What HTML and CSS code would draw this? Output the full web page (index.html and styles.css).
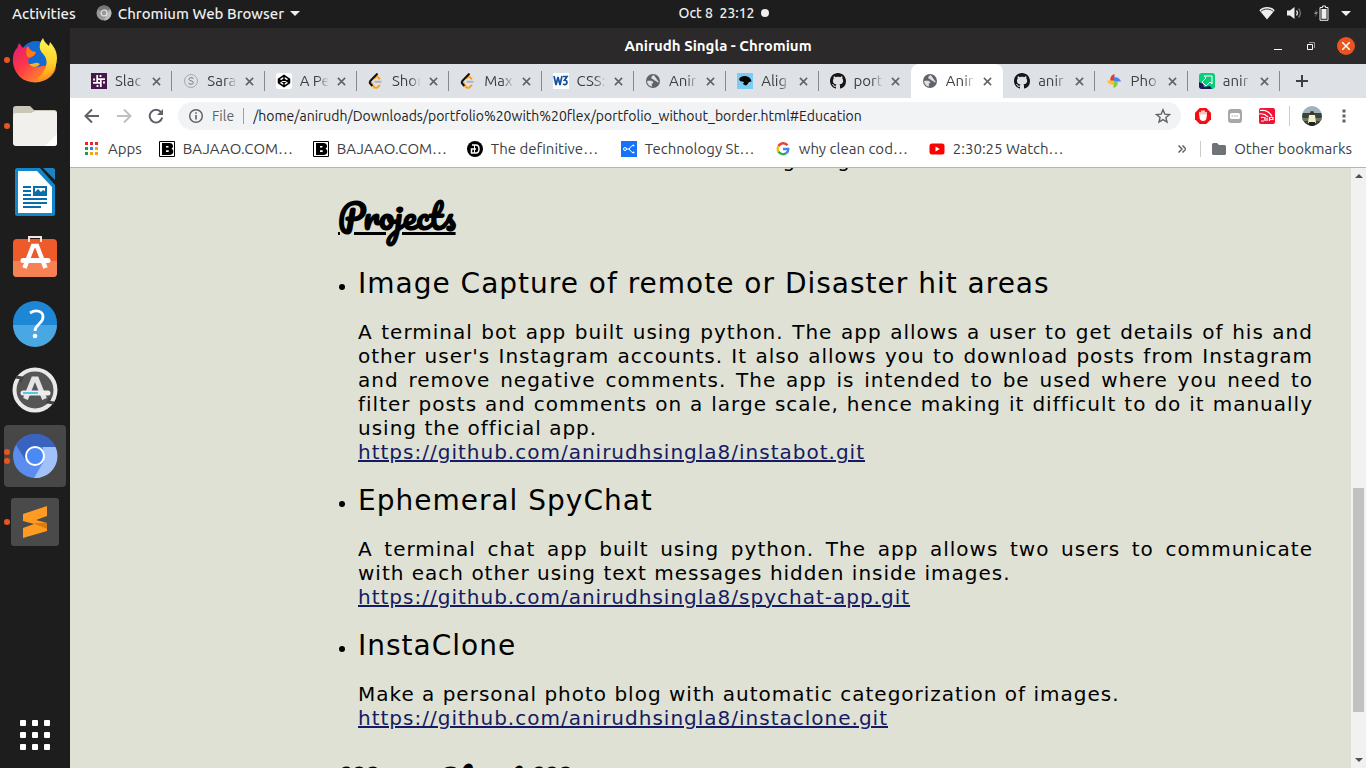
FILE: index.html
```html
<!DOCTYPE html>
<html lang="en">
<head>
<meta charset="utf-8">
<title>Anirudh Singla - Chromium</title>
<link rel="stylesheet" href="styles.css">
</head>
<body>
<svg class="defs" aria-hidden="true">
  <symbol id="x" viewBox="0 0 10 10"><path d="M1 1l8 8M9 1L1 9" stroke="#5f6368" stroke-width="1.7"/></symbol>
  <symbol id="globe" viewBox="0 0 16 16"><circle cx="8" cy="8" r="7" fill="#5f6368"/><path d="M9 2.2c-1 .8-2.5.8-2.5 2.3 0 1.7 2 .9 2.5 2.2.4 1 2.200.5 2.700 1.500.3.8 1 .8 1.900.500M2.500 8h3.200c1.600 0 2.300.8 2.300 2H6.600v3.300c-2.400-.5-4.300-2.600-4.100-5.300z" fill="#dee1e6" stroke="#dee1e6" stroke-width=".6"/></symbol>
  <symbol id="github" viewBox="0 0 16 16"><path fill="#171515" d="M8 0C3.580 0 0 3.580 0 8c0 3.540 2.290 6.530 5.470 7.590.4.070.550-.170.550-.380 0-.190-.010-.820-.010-1.490-2.010.370-2.530-.490-2.690-.940-.090-.230-.480-.940-.820-1.130-.280-.150-.680-.520-.010-.530.630-.010 1.080.580 1.230.820.720 1.210 1.870.870 2.330.660.070-.520.280-.870.510-1.070-1.780-.200-3.640-.890-3.640-3.950 0-.870.310-1.590.820-2.150-.080-.200-.360-1.020.080-2.120 0 0 .670-.210 2.200.820.640-.180 1.320-.270 2-.270s1.360.090 2 .270c1.530-1.040 2.200-.820 2.200-.820.440 1.100.160 1.920.080 2.120.510.560.820 1.270.820 2.150 0 3.070-1.870 3.750-3.650 3.950.290.250.540.730.540 1.480 0 1.070-.010 1.930-.010 2.200 0 .210.150.460.550.380A8 8 0 0 0 16 8c0-4.420-3.580-8-8-8z"/></symbol>
  <symbol id="leet" viewBox="0 0 16 16"><path d="M6 5.500L8.500 3l3.500 3.300M3 9l3.300 5.500 2.700.3 3-2.800" fill="none" stroke="#ffa116" stroke-width="2"/><path d="M9.500 .5L2.300 8c-.8 1-.6 2 0 2.700l2 2.300" fill="none" stroke="#111" stroke-width="2"/><path d="M6.500 8.800h7" stroke="#b3b3b3" stroke-width="2"/></symbol>
  <symbol id="bajaao" viewBox="0 0 16 16"><path fill="#fff" stroke="#000" d="M.5.5h15v15H.5z"/><path d="M3 2h7.500C13 2 14 3.500 14 5c0 1.300-.7 2.300-1.500 2.700 1 .4 1.800 1.500 1.800 2.800 0 2-1.500 3.500-3.800 3.500H3z"/><path d="M7 5h2.500v1.600H7zm0 4.200h2.700v1.700H7z" fill="#fff"/></symbol>
</svg>

<header class="topbar">
  <div class="topbar-left">
    <button class="plain">Activities</button>
    <button class="plain app-menu">
      <svg width="16" height="16" viewBox="0 0 16 16"><circle cx="8" cy="8" r="7.500" fill="#999"/><path d="M8 8L1.500 4.200A7.500 7.500 0 0 1 14.500 4.500H8z" fill="#777"/><path d="M8 15.500L11 9l3.500-4.500A7.500 7.500 0 0 1 8 15.500z" fill="#bbb"/><circle cx="8" cy="8" r="3" fill="#999" stroke="#e4e4e4" stroke-width="1.200"/></svg>
      Chromium Web Browser <span class="caret"></span></button>
  </div>
  <button class="plain clock">Oct 8&nbsp; 23:12 <span class="dot"></span></button>
  <div class="status">
    <svg width="16" height="14" viewBox="0 0 16 14"><path d="M8 13.500L.3 4.200C4.500-.2 11.500-.2 15.700 4.200z" fill="#eee"/><path d="M1.800 5.300c3.600-3 8.800-3 12.400 0" fill="none" stroke="#333"/></svg>
    <svg width="15" height="14" viewBox="0 0 15 14"><path d="M0 4.500h3L7.500 1v12L3 9.500H0z" fill="#eee"/><path d="M9.500 4.500c1.200 1.500 1.200 3.500 0 5" fill="none" stroke="#ddd" stroke-width="1.300"/><path d="M11.500 2.500c2.500 2.500 2.500 6.500 0 9" fill="none" stroke="#777" stroke-width="1.300"/></svg>
    <svg width="15" height="16" viewBox="0 0 15 16"><path d="M3 4L0 9h2l-1 3.500L4 7H2z" fill="#888"/><path d="M6 2.500h2.500V1h3v1.500H14v12.800H6z" fill="none" stroke="#eee"/><path d="M7.500 4h5v9.800h-5z" fill="#eee"/></svg>
    <span class="caret"></span>
  </div>
</header>

<div class="desktop">
<nav class="dock" aria-label="Dock">
  <button class="plain dock-item" aria-label="Firefox"><span class="marks"><i></i></span>
    <svg width="46" height="46" viewBox="0 0 46 46"><defs><linearGradient id="ff" x1="0" y1="0" x2="1" y2="1"><stop offset="0" stop-color="#d91b7c"/><stop offset=".4" stop-color="#ff3647"/><stop offset="1" stop-color="#ffb320"/></linearGradient><linearGradient id="fy" x1="0" y1="0" x2="0" y2="1"><stop offset="0" stop-color="#fff44f"/><stop offset=".6" stop-color="#ffd12c"/><stop offset="1" stop-color="#ff9414"/></linearGradient></defs><circle cx="24" cy="20" r="16" fill="#126bd3"/><path d="M7 6l4 5 5-2c1 3 4 6 8 6-2 5-5 5-7 6-2 4 0 8 4 9 6 1 9-2 12-1 6-4 6-12 4-18 7 8 10 20 3 27-8 9-23 10-32 2C-1 31-1 17 5 11z" fill="url(#ff)"/><path d="M16 9c1 3 4 6 8 6-2 5-5 5-7 6-3-2-4-7-1-12z" fill="#ff7a18"/><path d="M17 27c5 0 7-3 11 0-3 4-8 4-11 0z" fill="#ffad23"/><path d="M31 1c-5 7-4 12 1 17 5 6 3 16-8 25 13-1 21-10 21-22 0-8-4-12-7-16l-1 4c-2-2-5-4-6-8z" fill="url(#fy)"/></svg></button>
  <button class="plain dock-item" aria-label="Files"><span class="marks"><i></i></span>
    <svg width="46" height="42" viewBox="0 0 46 42"><path d="M1 12V4c0-2 1-3 3-3h14l4 4h20c2 0 3 1 3 3v6z" fill="#cbc7b8"/><path d="M1 11c0-2 1-3 3-3h15l4-2h19c2 0 3 1 3 3v29c0 2-1 3-3 3H4c-2 0-3-1-3-3z" fill="#f1f0ec"/><path d="M45 29v9c0 2-1 3-3 3h-9z" fill="#fff"/></svg></button>
  <button class="plain dock-item" aria-label="LibreOffice Writer"><span class="marks"></span>
    <svg width="40" height="48" viewBox="0 0 40 48"><path d="M2 0h23l15 17v29c0 1-1 2-2 2H2c-1 0-2-1-2-2V2C0 1 1 0 2 0z" fill="#1286cc"/><path d="M3 3h19l15 16v26H3z" fill="#fff"/><path d="M28 0h10c1 0 2 1 2 2v10z" fill="#1b84c2"/><g fill="#0a6ca9"><path d="M8 18h8v2H8zM8 22h8v2H8zM8 26h8v2H8zM8 30h24v2H8zM8 34h24v2H8zM8 38h18v2H8z"/></g><path d="M19 19h12v8H19z" fill="#fff" stroke="#0a6ca9" stroke-width="2"/><path d="M20 27v-3l3-3 3 3 2-2 3 2v3z" fill="#0a6ca9"/></svg></button>
  <button class="plain dock-item" aria-label="Ubuntu Software"><span class="marks"></span>
    <svg width="46" height="44" viewBox="0 0 46 44"><rect x="1" y="3" width="44" height="38" rx="4" fill="#ec5b29"/><path d="M1 25h44v12q0 4-4 4H5q-4 0-4-4z" fill="#f58154"/><path d="M17 6V1h12v5" fill="none" stroke="#fbe5da" stroke-width="2"/><path d="M12.500 32L21 10h4l8.500 22" fill="none" stroke="#fff" stroke-width="4.500"/><path d="M11 24.500h25" stroke="#fff" stroke-width="5" stroke-linecap="round"/></svg></button>
  <button class="plain dock-item" aria-label="Help"><span class="marks"></span>
    <svg width="46" height="46" viewBox="0 0 46 46"><circle cx="23" cy="22" r="22" fill="#1d86d5"/><path d="M1 24a22 22 0 0 0 44 0z" fill="#49a8e4"/><path d="M18 12c6-4 13-2 13 4 0 7-8 7-8 14" fill="none" stroke="#fff" stroke-width="2.800"/><circle cx="23" cy="35" r="2.300" fill="#fff"/></svg></button>
  <button class="plain dock-item" aria-label="Software Updater"><span class="marks"></span>
    <svg width="46" height="46" viewBox="0 0 46 46"><circle cx="23" cy="23" r="20.500" fill="#555" stroke="#e9e9e9" stroke-width="4"/><path d="M4 10l6 1-2 4M42 36l-6-1 2-4" stroke="#444" stroke-width="3" fill="none"/><path d="M13.500 32L21.500 12h3l8 20" fill="none" stroke="#e4e4e4" stroke-width="5"/><path d="M11 26h25" stroke="#eee" stroke-width="5" stroke-linecap="round"/><path d="M11 26h15" stroke="#2bb3e6" stroke-width="1.500"/></svg></button>
  <button class="plain dock-item current" aria-label="Chromium"><span class="marks"><i></i><i></i></span>
    <svg width="46" height="46" viewBox="0 0 46 46"><circle cx="23" cy="23" r="22" fill="#5b8def"/><path d="M23 23L4 12A22 22 0 0 1 43.500 14H23z" fill="#3a62bf"/><path d="M4 12l10 16 9-9z" fill="#3a62bf"/><path d="M43.500 14A22 22 0 0 1 22 45l10-17-1-14z" fill="#a1c1f8"/><circle cx="23" cy="23" r="9" fill="#4a8af4" stroke="#fff" stroke-width="2"/></svg></button>
  <button class="plain dock-item" aria-label="Sublime Text"><span class="marks"><i></i></span>
    <svg width="48" height="48" viewBox="0 0 48 48"><rect width="48" height="48" rx="3" fill="#4a4a4a"/><path d="M12 16L36 8v10l-11 4 11 3v8l-24 7V30l11-4-11-3z" fill="#ff9a22"/><path d="M22 25l14 0v6z" fill="#d97c10"/></svg></button>
  <button class="plain show-apps" aria-label="Show Applications"><i></i><i></i><i></i><i></i><i></i><i></i><i></i><i></i><i></i></button>
</nav>

<section class="window">
  <div class="titlebar">
    <strong>Anirudh Singla - Chromium</strong>
    <div class="window-controls">
      <button class="plain" aria-label="Minimize"><svg width="8" height="10"><path d="M0 8.500h8" stroke="#fff"/></svg></button>
      <button class="plain" aria-label="Restore"><svg width="8" height="8" viewBox="0 0 8 8"><path d="M.5 2.500h5v5h-5z" fill="none" stroke="#fff"/><path d="M2 .5h5.500V6" fill="none" stroke="#999"/></svg></button>
      <button class="plain close" aria-label="Close"><svg width="8" height="8"><path d="M0 0l8 8M8 0L0 8" stroke="#fff" stroke-width="1.500"/></svg></button>
    </div>
  </div>

  <div class="tabstrip">
    <div class="tabs" role="tablist">
      <button class="plain tab" role="tab"><svg width="16" height="16" viewBox="0 0 16 16"><path fill="#4a154b" d="M0 0h16v16H0z"/><path d="M6.200 2v8M9.800 6v8M2 9.800h8M6 6.200h8M9.500 2v2M6.500 12v2M2 6.500h2M12 9.500h2" stroke="#fff" stroke-width="1.800"/></svg><span class="label">Slac</span><svg class="x"><use href="#x"/></svg></button>
      <button class="plain tab" role="tab"><svg width="16" height="16" viewBox="0 0 16 16"><circle cx="8" cy="8" r="6.500" fill="none" stroke="#aaa"/><path d="M10.500 5.500C9 4 5.800 4.500 6 6.300c.2 2 4.500 1.200 4.300 3.300-.2 2-3.500 2-4.800.600" fill="none" stroke="#777"/></svg><span class="label">Sara</span><svg class="x"><use href="#x"/></svg></button>
      <button class="plain tab" role="tab"><svg width="16" height="16" viewBox="0 0 16 16"><rect width="16" height="16" rx="2" fill="#fff"/><path d="M8 2.500l5.500 3.600v3.800L8 13.500 2.500 9.900V6.100zM2.500 6.100L8 9.900l5.500-3.800M2.500 9.900L8 6.100l5.500 3.800M8 2.500v3.600M8 9.900v3.600" fill="none" stroke="#000" stroke-width="1.500"/></svg><span class="label">A Pe</span><svg class="x"><use href="#x"/></svg></button>
      <button class="plain tab" role="tab"><svg width="16" height="16"><use href="#leet"/></svg><span class="label">Shor</span><svg class="x"><use href="#x"/></svg></button>
      <button class="plain tab" role="tab"><svg width="16" height="16"><use href="#leet"/></svg><span class="label">Max</span><svg class="x"><use href="#x"/></svg></button>
      <button class="plain tab" role="tab"><svg width="16" height="16" viewBox="0 0 16 16"><path fill="#fff" d="M0 0h16v16H0z"/><path d="M1 3l2 9 2-8 2 8 2-9M10 3.500h4l-2.500 3.700c3.500 0 3 4.500 0 4.500L10 11" fill="none" stroke="#1550a0" stroke-width="1.700"/></svg><span class="label">CSS:</span><svg class="x"><use href="#x"/></svg></button>
      <button class="plain tab" role="tab"><svg width="16" height="16"><use href="#globe"/></svg><span class="label">Anir</span><svg class="x"><use href="#x"/></svg></button>
      <button class="plain tab" role="tab"><svg width="16" height="16" viewBox="0 0 16 16"><path fill="#7accf5" d="M0 0h16v16H0z"/><path d="M2 6c2-3 5-3.500 8-2.500 2 .5 4 2 4.500 5L12 9c-1 1-1.500 3-3.500 3.500L6 11l1-2-4-1z" fill="#050505"/></svg><span class="label">Alig</span><svg class="x"><use href="#x"/></svg></button>
      <button class="plain tab" role="tab"><svg width="16" height="16"><use href="#github"/></svg><span class="label">port</span><svg class="x"><use href="#x"/></svg></button>
      <button class="plain tab active" role="tab" aria-selected="true"><svg width="16" height="16"><use href="#globe"/></svg><span class="label">Anir</span><svg class="x"><use href="#x"/></svg></button>
      <button class="plain tab" role="tab"><svg width="16" height="16"><use href="#github"/></svg><span class="label">anir</span><svg class="x"><use href="#x"/></svg></button>
      <button class="plain tab" role="tab"><svg width="16" height="16" viewBox="0 0 16 16"><path d="M8.500 1v7H4.500C3.500 5 5.500 2 8.500 1z" fill="#e53935"/><path d="M15 8.500H8v-4c3-1 6 1 7 4z" fill="#4285f4"/><path d="M7.500 15V8h4c1 3-1 6-4 7z" fill="#8cc63f"/><path d="M1 7.500h7v4c-3 1-6-1-7-4z" fill="#fbc02d"/></svg><span class="label">Pho</span><svg class="x"><use href="#x"/></svg></button>
      <button class="plain tab" role="tab"><svg width="16" height="16" viewBox="0 0 16 16"><rect width="16" height="16" rx="3" fill="#06d07c"/><path d="M0 9l4 2 1 3 6-1 2 3H3q-3 0-3-3z" fill="#26135c"/><path d="M5 3h8v8l-2-2-4 4-4-4 4-4z" fill="#10c878" stroke="#fff"/></svg><span class="label">anir</span><svg class="x"><use href="#x"/></svg></button>
    </div>
    <button class="plain new-tab" aria-label="New tab"><svg width="12" height="12"><path d="M6 0v12M0 6h12" stroke="#3c4043" stroke-width="2"/></svg></button>
  </div>

  <div class="toolbar">
    <button class="plain" aria-label="Back"><svg width="16" height="16" viewBox="0 0 16 16"><path d="M15 8H2M8 1.500L1.500 8 8 14.500" fill="none" stroke="#5f6368" stroke-width="2"/></svg></button>
    <button class="plain" aria-label="Forward" disabled><svg width="16" height="16" viewBox="0 0 16 16"><path d="M1 8h13M8 1.500L14.500 8 8 14.500" fill="none" stroke="#bdc1c6" stroke-width="2"/></svg></button>
    <button class="plain" aria-label="Reload"><svg width="16" height="16" viewBox="0 0 16 16"><path d="M13 4.200A6.300 6.300 0 1 0 14.200 9.500" fill="none" stroke="#5f6368" stroke-width="2"/><path d="M15 1v6H9z" fill="#5f6368"/></svg></button>
    <div class="omnibox">
      <svg width="16" height="16" viewBox="0 0 16 16"><circle cx="8" cy="8" r="6.300" fill="none" stroke="#5f6368" stroke-width="1.500"/><path d="M8 7v4.500M8 4.200v1.600" stroke="#5f6368" stroke-width="1.600"/></svg>
      <label for="url">File</label>
      <input id="url" type="text" value="/home/anirudh/Downloads/portfolio%20with%20flex/portfolio_without_border.html#Education">
      <button class="plain" aria-label="Bookmark this page"><svg width="16" height="16" viewBox="0 0 16 16"><path d="M8 1.800l1.800 4.300 4.700.4-3.600 3 1.100 4.600L8 11.600l-4 2.500 1.100-4.600-3.600-3 4.700-.4z" fill="none" stroke="#5f6368" stroke-width="1.400"/></svg></button>
    </div>
    <div class="extensions">
      <button class="plain" aria-label="AdBlock"><svg width="16" height="16" viewBox="0 0 16 16"><path d="M4.700 0h6.600L16 4.700v6.600L11.300 16H4.700L0 11.300V4.700z" fill="#f40d12"/><path d="M5 7V4.500M7 7V3M9 7V3M11 8V4.500" stroke="#fff" stroke-width="1.500" stroke-linecap="round"/><path d="M4.500 6.500h7V10c0 2-1.500 3-3.500 3s-3.500-1.500-3.500-3z" fill="#fff"/></svg></button>
      <button class="plain" aria-label="Extension"><svg width="16" height="16" viewBox="0 0 16 16"><rect x="1" y="1" width="14" height="14" rx="3" fill="#a8a8a8"/><rect x="3" y="5" width="10" height="6" rx="1.500" fill="#fff"/><path d="M4.500 8h7" stroke="#a8a8a8" stroke-dasharray="1.500 1"/></svg></button>
      <button class="plain" aria-label="Cast extension"><svg width="16" height="16" viewBox="0 0 16 16"><rect width="16" height="16" rx="2" fill="#ef1335"/><path d="M1 2.500c6-1 10 2 12 6M0 6c4-1 7 1 9 3" fill="none" stroke="#fff" stroke-width="1.200"/><path d="M2 9.500c2-.5 3.500 0 4 1M2 13h3M6 9v4M8 10v3M10.500 13v-3.500h3.500v2h-3" fill="none" stroke="#fff" stroke-width="1.200"/></svg></button>
    </div>
    <button class="plain profile" aria-label="Profile"><svg width="20" height="20" viewBox="0 0 20 20"><defs><clipPath id="av"><circle cx="10" cy="10" r="10"/></clipPath></defs><g clip-path="url(#av)"><path d="M0 0h20v8H0z" fill="#9fb3bd"/><path d="M0 7h20v13H0z" fill="#3b4238"/><path d="M0 12h20v3H0z" fill="#6e7563"/><path d="M7 9h6l1 8H6z" fill="#f4efcf"/><circle cx="10" cy="7" r="2" fill="#4a3426"/><path d="M7 16h6v4H7z" fill="#222"/></g></svg></button>
    <button class="plain" aria-label="Menu"><svg width="4" height="14"><path d="M.5.5h3v3h-3zM.5 5.500h3v3h-3zM.5 10.500h3v3h-3z" fill="#5f6368"/></svg></button>
  </div>

  <nav class="bookmarks" aria-label="Bookmarks">
    <a href="#apps" class="apps"><svg width="14" height="14"><path d="M0 0h3v3H0zM5 0h3v3H5zM10 0h3v3h-3z" fill="#e8252b"/><path d="M0 5h3v3H0zM0 10h3v3H0z" fill="#12a050"/><path d="M5 5h3v3H5z" fill="#2d7ff0"/><path d="M10 5h3v3h-3zM5 10h3v3H5zM10 10h3v3h-3z" fill="#f5a511"/></svg>Apps</a>
    <a href="#b1"><svg width="16" height="16"><use href="#bajaao"/></svg><span>BAJAAO.COM…</span></a>
    <a href="#b2"><svg width="16" height="16"><use href="#bajaao"/></svg><span>BAJAAO.COM…</span></a>
    <a href="#b3"><svg width="16" height="16" viewBox="0 0 16 16"><circle cx="8" cy="8" r="8"/><path d="M5 4h4c4 0 4 8 0 8H4.500V8H9" fill="none" stroke="#fff" stroke-width="1.500"/><path d="M7.500 4v8" stroke="#fff"/></svg><span>The definitive…</span></a>
    <a href="#b4"><svg width="16" height="16" viewBox="0 0 16 16"><path fill="#1473f9" d="M0 0h16v16H0z"/><path d="M5 8h3l3-3.500h2M8 8l3 3.500h2" fill="none" stroke="#fff"/><circle cx="4" cy="8" r="1.500" fill="none" stroke="#fff"/><circle cx="12.500" cy="4.500" r="1" fill="#fff"/><circle cx="12.500" cy="11.500" r="1" fill="#fff"/></svg><span>Technology St…</span></a>
    <a href="#b5"><svg width="16" height="16" viewBox="0 0 16 16"><g fill="none" stroke-width="2.400"><path d="M12.500 4.300A5.300 5.300 0 0 0 3.500 5.300" stroke="#ea4335"/><path d="M3.500 5.300a5.300 5.300 0 0 0 0 5.400" stroke="#fbbc05"/><path d="M3.500 10.700a5.300 5.300 0 0 0 8 1.200" stroke="#34a853"/><path d="M11.500 12A5.200 5.200 0 0 0 13.300 8H8" stroke="#4285f4"/></g></svg><span>why clean cod…</span></a>
    <a href="#b6"><svg width="16" height="16" viewBox="0 0 16 16"><rect x=".5" y="2.500" width="15" height="11" rx="2.500" fill="#f00"/><path d="M6.500 5.500v5L10.800 8z" fill="#fff"/></svg><span>2:30:25 Watch…</span></a>
    <button class="plain overflow" aria-label="More bookmarks"><svg width="8" height="8"><path d="M.5.500L4 4 .5 7.500M4.500.500L8 4 4.500 7.500" fill="none" stroke="#5f6368" stroke-width="1.500"/></svg></button>
    <a href="#other" class="other"><svg width="14" height="12"><path d="M0 1.500Q0 0 1.500 0H5l2 2h5.500Q14 2 14 3.500v7q0 1.500-1.500 1.500h-11Q0 12 0 10.500z" fill="#6f7377"/></svg>Other bookmarks</a>
  </nav>

  <div class="viewport">
    <main class="page">
      <div class="previous"><p>during magnetism</p></div>
      <h2>Projects</h2>
      <ul>
        <li><h3>Image Capture of remote or Disaster hit areas</h3>
          <p>A terminal bot app built using python. The app allows a user to get details of his and other user's Instagram accounts. It also allows you to download posts from Instagram and remove negative comments. The app is intended to be used where you need to filter posts and comments on a large scale, hence making it difficult to do it manually using the official app.<br><a href="https://github.com/anirudhsingla8/instabot.git">https://github.com/anirudhsingla8/instabot.git</a></p></li>
        <li><h3>Ephemeral SpyChat</h3>
          <p>A terminal chat app built using python. The app allows two users to communicate with&nbsp;each other using text messages hidden inside images.<br><a href="https://github.com/anirudhsingla8/spychat-app.git">https://github.com/anirudhsingla8/spychat-app.git</a></p></li>
        <li><h3>InstaClone</h3>
          <p>Make a personal photo blog with automatic categorization of images.<br><a href="https://github.com/anirudhsingla8/instaclone.git">https://github.com/anirudhsingla8/instaclone.git</a></p></li>
      </ul>
      <h2 class="next">Mean Chart Me</h2>
    </main>
    <div class="scrollbar" aria-hidden="true"><span class="arrow up"></span><span class="track"><span class="thumb"></span></span><span class="arrow down"></span></div>
  </div>
</section>
</div>
</body>
</html>
```
FILE: styles.css
```css
* { box-sizing: border-box; }
html, body { height: 100%; }
body {
  margin: 0;
  display: flex;
  flex-direction: column;
  overflow: hidden;
  background: #1d1d1d;
  font-family: Ubuntu, "Noto Sans", sans-serif;
  font-size: 15px;
  color: #3c4043;
}
svg { display: block; flex: none; }
.defs { position: absolute; width: 0; height: 0; }
.plain { border: 0; padding: 0; margin: 0; background: none; font: inherit; color: inherit; }

.topbar {
  flex: none;
  height: 28px;
  display: grid;
  grid-template-columns: 1fr auto 1fr;
  align-items: center;
  padding: 0 15px 2px 12px;
  color: #eee;
  font-weight: 500;
}
.topbar-left { display: flex; gap: 20px; }
.app-menu, .clock { display: flex; align-items: center; gap: 6px; white-space: nowrap; }
.topbar .clock { margin-left: 84px; font-size: 14px; }
.status { display: flex; justify-content: flex-end; align-items: center; gap: 12px; }
.caret { border: 5px solid transparent; border-top-color: #eee; border-bottom: 0; }
.dot { width: 8px; height: 8px; border-radius: 50%; background: #eee; }

.desktop { flex: 1; min-height: 0; display: flex; }
.dock { flex: none; width: 70px; display: flex; flex-direction: column; gap: 4px; padding: 1px 4px 18px; }
.dock-item { flex: none; height: 62px; display: flex; align-items: center; justify-content: center; border-radius: 4px; position: relative; }
.current { background: #474747; }
.marks { position: absolute; left: 0; display: grid; gap: 3px; }
.marks i { width: 6px; height: 6px; border-radius: 50%; background: #e95420; }
.show-apps { margin: auto auto 0; display: grid; grid-template-columns: repeat(3, 6px); gap: 6px; }
.show-apps i { height: 6px; border-radius: 1px; background: #fff; }

.window { flex: 1; min-width: 0; display: flex; flex-direction: column; background: #fff; }
.titlebar { flex: none; height: 36px; display: grid; grid-template-columns: 1fr auto 1fr; align-items: center; background: #2c292a; color: #fff; padding: 0 11px 1px; }
.titlebar strong { grid-column: 2; }
.window-controls { display: flex; justify-content: flex-end; align-items: center; gap: 25px; }
.window-controls .close { width: 18px; height: 18px; margin-left: -3px; border-radius: 50%; background: #e95420; display: grid; place-items: center; }

.tabstrip { flex: none; height: 34px; display: flex; background: #dee1e6; padding-left: 10px; }
.tabs { flex: 1; min-width: 0; display: flex; }
.tab { flex: 1; min-width: 0; display: flex; align-items: center; padding: 0 11px; gap: 8px; position: relative; }
.tab::after { content: ""; position: absolute; right: 0; top: 7px; height: 20px; border-right: 1px solid #85888c; }
.tab .label { flex: 1; min-width: 0; overflow: hidden; white-space: nowrap; text-align: left; line-height: 18px; padding-bottom: 1px; mask-image: linear-gradient(90deg, #000 60%, transparent); }
.tab .x { width: 9px; height: 9px; }
.tab.active { background: #fff; border-radius: 8px 8px 0 0; }
.tab.active::after, .tab:has(+ .active)::after { display: none; }
.new-tab { flex: none; width: 86px; padding-left: 16px; }

.toolbar { flex: none; height: 36px; display: flex; align-items: center; gap: 16px; padding: 0 20px 0 14px; }
.omnibox { flex: 1; display: flex; align-items: center; height: 28px; margin-left: -2px; padding: 0 10px; border-radius: 14px; background: #f1f3f4; font-size: 14px; }
.omnibox label { margin-left: 8px; padding-right: 9px; border-right: 1px solid #9aa0a6; line-height: 16px; color: #5f6368; }
.omnibox input { flex: 1; min-width: 0; border: 0; padding: 0 0 0 9px; background: none; font: inherit; color: #202124; outline: 0; }
.extensions { display: flex; gap: 16px; margin-left: -2px; }
.profile { margin-left: -2px; padding-left: 12px; border-left: 1px solid #ccc; height: 20px; }
.toolbar > :last-child { margin-left: 4px; }

.bookmarks { flex: none; height: 34px; display: flex; align-items: center; gap: 18px; padding: 0 14px 3px 15px; border-bottom: 1px solid #b3b5b2; }
.bookmarks a { display: flex; align-items: center; gap: 8px; color: inherit; text-decoration: none; white-space: nowrap; line-height: 16px; }
.bookmarks a span { width: 112px; }
.bookmarks .apps { gap: 9px; margin-right: -1px; }
.overflow { margin-left: auto; }
.bookmarks .other { padding-left: 11px; margin-left: -4px; border-left: 1px solid #ccc; }

.viewport { flex: 1; min-height: 0; display: flex; background: #dfe1d4; color: #000; }
.page { flex: 1; min-width: 0; overflow: hidden; padding: 0 38px 0 268px; font-family: "DejaVu Sans", sans-serif; font-size: 20px; line-height: 24px; letter-spacing: 1px; }
.page p { margin: 0; text-align: justify; }
.previous { height: 4px; display: flex; align-items: flex-end; justify-content: center; overflow: hidden; }
.page h2 { margin: 16px 0 0; font: bold 34px/56px Pacifico, "Lato", cursive; letter-spacing: 0; text-decoration: underline; text-decoration-thickness: 3px; }
.page .next { margin-top: 24px; }
.page ul { margin: 23px 0 0; padding-left: 20px; }
.page li { margin-bottom: 20px; }
.page h3 { margin: 0 0 20px; font-size: 28px; line-height: 33px; font-weight: 400; }
.page a { color: #151b63; }

.scrollbar { flex: none; width: 15px; display: flex; flex-direction: column; align-items: center; justify-content: space-between; padding: 6px 2px; background: #f1f1f1; }
.arrow { border: 4px solid transparent; }
.up { border-bottom-color: #505050; border-top: 0; }
.down { border-top-color: #505050; border-bottom: 0; }
.track { flex: 1; width: 11px; display: flex; flex-direction: column; justify-content: flex-end; padding-bottom: 46px; }
.thumb { height: 42%; background: #c1c1c1; }
```
